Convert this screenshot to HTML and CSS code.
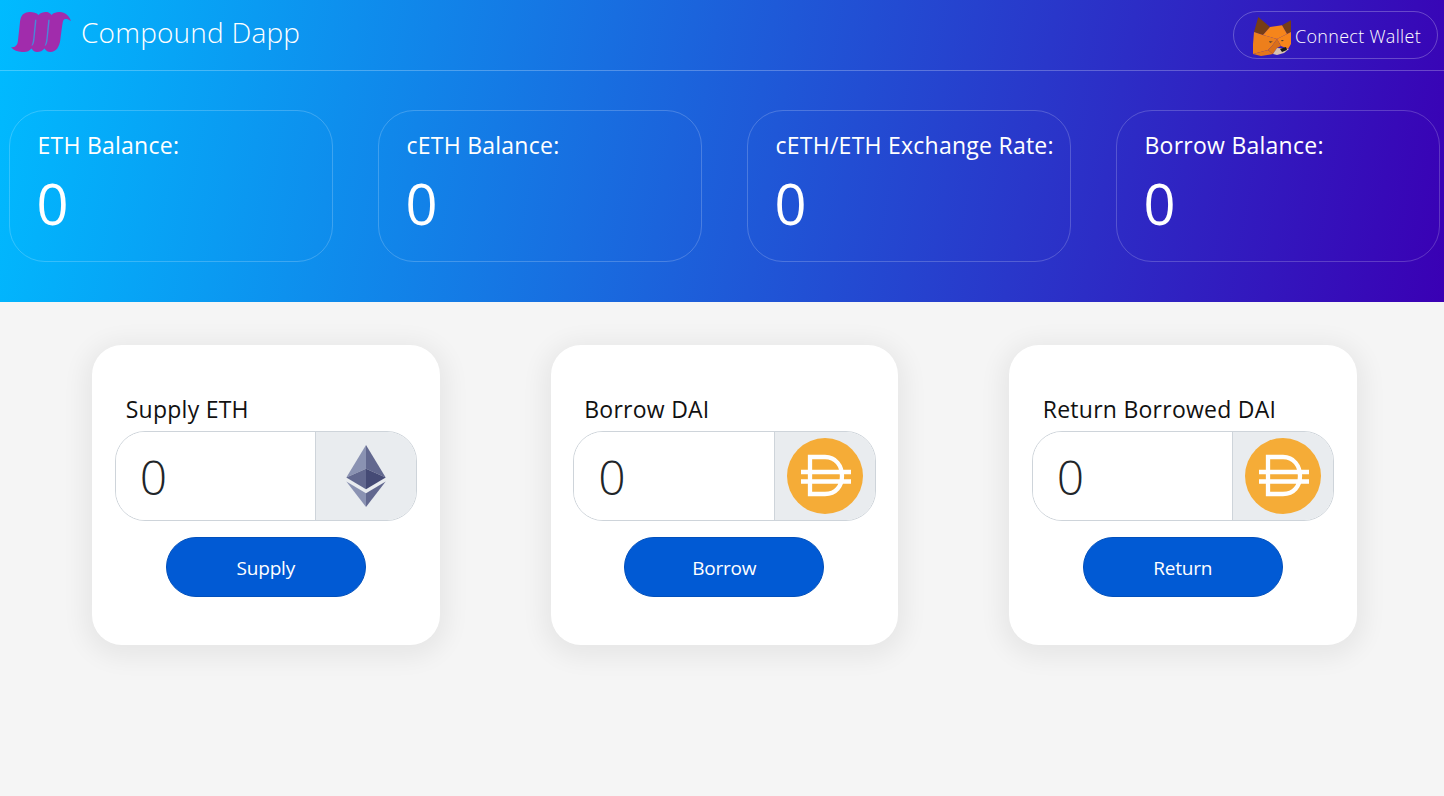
FILE: index.html
```html
<!DOCTYPE html>
<html lang="en">
<head>
<meta charset="utf-8">
<title>Compound Dapp</title>
<link rel="stylesheet" href="styles.css">
</head>
<body>
<header class="hero">
  <nav class="nav">
    <div class="brand">
      <svg class="logo" viewBox="0 0 60 40" aria-hidden="true">
        <path fill="#a12cac" d="M0 35.300C3.500 35.500 6 34 6.800 30L9 10C9.600 4 12 .8 17 .2C21 -.2 25 .5 27.500 3C30 .5 33 -.2 36 .1C37.500 .3 39 1.300 40.500 3C43 .5 46 -.1 49 .1C54 .4 58 3.500 60 9C57.800 7.400 56 6.800 54.500 6.900C53 7 52.200 8 51.800 10C51 14.500 50.300 20 49.300 28C48.400 35 45 40 39.500 40C37 40 35 39 33.500 36.500C31.500 39 29 40 26 40C24 40 22 39 20.500 36.500C18.500 39 16 40 13 40C8 40.200 3 39 0 35.300Z"/>
        <path fill="#4c86d8" d="M24 8C25 7 25.500 7.500 25.400 9L23.300 29C22.800 32 21.500 34.500 20.500 33.500C21.500 31.500 21.900 29 22.200 26.500ZM37.200 8C38.200 7 38.700 7.500 38.600 9L36.500 29C36 32 34.700 34.500 33.700 33.500C34.700 31.500 35.100 29 35.400 26.500Z"/>
      </svg>
      <span class="brand-name">Compound Dapp</span>
    </div>
    <button class="wallet" type="button">
      <svg class="fox" viewBox="0 0 38 40" aria-hidden="true">
        <polygon fill="#763d16" points="5.300,1 17,11 10,19 1,16"/>
        <polygon fill="#763d16" points="38,4.300 29,9.300 34,18 38,16"/>
        <polygon fill="#f6851b" points="17,11 29,9.300 34,18 24,23 10,19"/>
        <polygon fill="#ed7f1c" points="1,16 10,19 24,23 19,30 15,34 0,38 0,28"/>
        <polygon fill="#f6851b" points="34,18 38,16 38,28 35,33 28,30 24,23"/>
        <polygon fill="#e4761b" points="0,38 15,34 20,38 8,40"/>
        <polygon fill="#d96f1a" points="15,34 19,30 24,23 28,30 24,32 20,38"/>
        <polygon fill="#d7c1b3" points="20,38 24,32 36,33 31,37 24,39"/>
        <polygon fill="#161616" points="27,33 33,31 34,34 29,36"/>
        <polygon fill="#52402f" points="16,25 20,25.500 17,27"/>
        <polygon fill="#52402f" points="28,24 31,24 29,25.500"/>
      </svg>
      <span>Connect Wallet</span>
    </button>
  </nav>
  <section class="stats">
    <div class="stat"><div class="stat-label">ETH Balance:</div><div class="stat-value">0</div></div>
    <div class="stat"><div class="stat-label">cETH Balance:</div><div class="stat-value">0</div></div>
    <div class="stat"><div class="stat-label">cETH/ETH Exchange Rate:</div><div class="stat-value">0</div></div>
    <div class="stat"><div class="stat-label">Borrow Balance:</div><div class="stat-value">0</div></div>
  </section>
</header>
<main class="actions">
  <form class="card">
    <label class="card-label">Supply ETH</label>
    <div class="field">
      <input class="amount" type="text" value="0">
      <span class="addon">
        <svg class="eth" viewBox="0 0 40 64" aria-hidden="true">
          <polygon fill="#8a92b2" points="20,0 0,33 20,24"/>
          <polygon fill="#62688f" points="20,0 40,33 20,24"/>
          <polygon fill="#62688f" points="0,33 20,24 20,45"/>
          <polygon fill="#454a75" points="40,33 20,24 20,45"/>
          <polygon fill="#8a92b2" points="0,37 20,49 20,63"/>
          <polygon fill="#62688f" points="40,37 20,49 20,63"/>
        </svg>
      </span>
    </div>
    <button class="submit" type="button">Supply</button>
  </form>
  <form class="card">
    <label class="card-label">Borrow DAI</label>
    <div class="field">
      <input class="amount" type="text" value="0">
      <span class="addon">
        <svg class="dai" viewBox="0 0 76 76" aria-hidden="true">
          <circle cx="38" cy="38" r="38" fill="#f5ac37"/>
          <path fill="none" stroke="#fefefe" stroke-width="4.300" d="M23 19H38C49 19 55 28 55 38C55 48 49 56 38 56H23ZM14 34H64M14 43.500H64"/>
        </svg>
      </span>
    </div>
    <button class="submit" type="button">Borrow</button>
  </form>
  <form class="card">
    <label class="card-label">Return Borrowed DAI</label>
    <div class="field">
      <input class="amount" type="text" value="0">
      <span class="addon">
        <svg class="dai" viewBox="0 0 76 76" aria-hidden="true">
          <circle cx="38" cy="38" r="38" fill="#f5ac37"/>
          <path fill="none" stroke="#fefefe" stroke-width="4.300" d="M23 19H38C49 19 55 28 55 38C55 48 49 56 38 56H23ZM14 34H64M14 43.500H64"/>
        </svg>
      </span>
    </div>
    <button class="submit" type="button">Return</button>
  </form>
</main>
</body>
</html>
```
FILE: styles.css
```css
* { box-sizing: border-box; }
html, body { margin: 0; height: 100%; }
body {
  background: #f5f5f5;
  font-family: "Open Sans", "Noto Sans", sans-serif;
  overflow: hidden;
}
.hero {
  height: 302px;
  background: linear-gradient(100deg, #00bbff 0%, #3a00b4 100%);
}
.nav {
  height: 71px;
  display: flex;
  align-items: center;
  justify-content: space-between;
  padding: 0 6px 0 11px;
  border-bottom: 1px solid rgba(255, 255, 255, .25);
}
.brand { display: flex; align-items: center; gap: 10px; margin-top: -7px; }
.logo { width: 60px; height: 40px; display: block; }
.brand-name {
  color: #fff;
  font-weight: 300;
  font-size: 28px;
  line-height: 38px;
  letter-spacing: .2px;
}
.wallet {
  width: 205px;
  height: 48px;
  margin-top: -1px;
  padding: 2px 0 0 19px;
  display: flex;
  align-items: center;
  gap: 4px;
  background: transparent;
  border: 1px solid rgba(255, 255, 255, .25);
  border-radius: 24px;
  color: #fff;
  font-family: inherit;
  font-weight: 300;
  font-size: 18px;
  letter-spacing: .3px;
}
.fox { width: 38px; height: 40px; flex: none; }
.stats {
  display: grid;
  grid-template-columns: repeat(4, 324px);
  gap: 45px;
  padding: 39px 0 0 9px;
}
.stat {
  height: 152px;
  padding: 17px 0 0 27.5px;
  border: 1px solid rgba(255, 255, 255, .2);
  border-radius: 36px;
  color: #fff;
  white-space: nowrap;
}
.stat-label { font-size: 23px; line-height: 34px; letter-spacing: .25px; }
.stat-value { font-size: 56px; line-height: 76px; font-weight: 400; margin-top: 3px; margin-left: -1px; }
.actions {
  display: flex;
  gap: 110.75px;
  padding: 43px 0 0 92px;
}
.card {
  width: 347.75px;
  height: 300px;
  padding: 46px 23px 0 22.75px;
  background: #fff;
  border-radius: 30px;
  box-shadow: 0 5px 25px 8px rgba(0, 0, 0, .06);
  display: flex;
  flex-direction: column;
}
.card-label {
  padding-left: 11px;
  font-size: 23px;
  line-height: 36px;
  color: #111;
  letter-spacing: .25px;
  white-space: nowrap;
}
.field {
  width: 302.5px;
  height: 90px;
  margin-top: 4px;
  display: flex;
  border: 1px solid #ced4da;
  border-radius: 30px;
  overflow: hidden;
}
.amount {
  width: 199.5px;
  border: 0;
  outline: 0;
  padding: 0 0 0 24px;
  font-family: inherit;
  font-size: 48px;
  font-weight: 300;
  color: #212529;
  background: #fff;
}
.addon {
  flex: 1;
  display: flex;
  align-items: center;
  justify-content: center;
  background: #e9ecef;
  border-left: 1px solid #ced4da;
}
.eth { width: 40px; height: 63px; display: block; }
.dai { width: 76px; height: 76px; display: block; }
.submit {
  align-self: center;
  width: 200px;
  height: 60px;
  margin-top: 16px;
  padding-top: 2px;
  background: #015ad4;
  border: 1px solid #0150bc;
  border-radius: 30px;
  color: #fff;
  font-family: inherit;
  font-size: 19px;
  letter-spacing: -.2px;
}
```
